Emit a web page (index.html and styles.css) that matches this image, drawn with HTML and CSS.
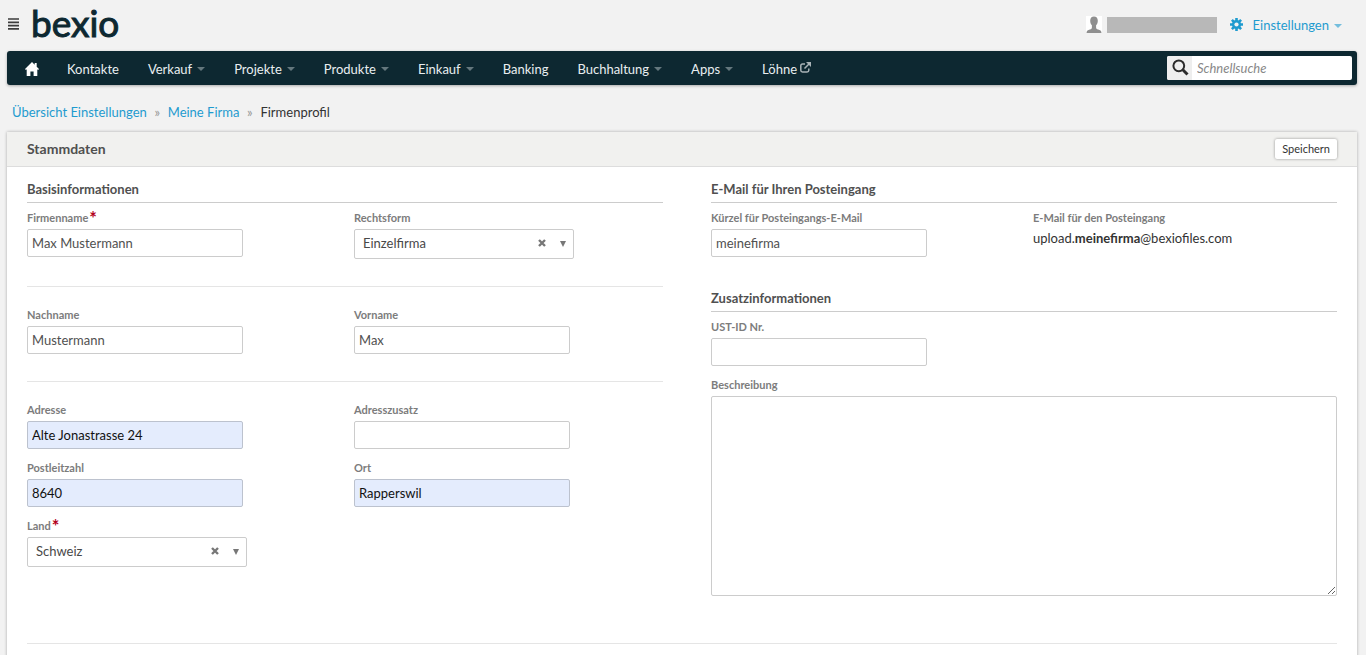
FILE: index.html
```
<!DOCTYPE html>
<html lang="de">
<head>
  <meta charset="UTF-8">
  <meta name="viewport" content="width=device-width, initial-scale=1.0">
  <title>bexio - Firmenprofil</title>
  <link rel="stylesheet" href="styles.css">
</head>
<body>
  <header class="topbar">
    <button type="button" class="menu-toggle" aria-label="Menü">
      <svg width="12" height="12" viewBox="0 0 12 12"><path d="M1 1h11M1 4.300h11M1 7.600h11M1 10.900h11" stroke="#3c3c3c" stroke-width="1.700"/></svg>
    </button>
    <a href="#" class="logo">bexio</a>
    <div class="account">
      <svg class="avatar" width="16" height="17" viewBox="0 0 16 17">
        <rect width="16" height="17" fill="#fff"/>
        <path d="M8 .5c2.400 0 3.800 1.500 3.800 4.200 0 2.300-.8 3.600-1.700 4.500v2.200c0 1 .6 1.600 2 2.200 2 .8 3.300 1 3.400 3.400H.5c.1-2.400 1.400-2.600 3.400-3.400 1.400-.6 2-1.200 2-2.200V9.200C5 8.300 4.200 7 4.200 4.700 4.200 2 5.600.5 8 .5z" fill="#8f8f8f"/>
      </svg>
      <span class="username"></span>
      <svg class="gear" width="13" height="13" viewBox="0 0 13 13">
        <g stroke="#1f9bcf" stroke-width="2.600">
          <path d="M6.500 0v13M0 6.500h13M1.900 1.900l9.200 9.200M11.100 1.900l-9.200 9.200"/>
        </g>
        <circle cx="6.500" cy="6.500" r="4.600" fill="#1f9bcf"/>
        <circle cx="6.500" cy="6.500" r="2.100" fill="#f2f2f2"/>
      </svg>
      <a href="#" class="settings">Einstellungen<span class="caret"></span></a>
    </div>
  </header>

  <nav class="navbar">
    <a href="#" class="home" aria-label="Home">
      <svg width="14" height="14" viewBox="0 0 14 14"><path d="M7 0l2.700 2.700V1h2v3.700L14 7l-.9.900-.8-.7V14H8.600V9.500H5.400V14H1.700V7.200l-.8.700L0 7z" fill="#fff"/></svg>
    </a>
    <a href="#">Kontakte</a>
    <a href="#">Verkauf<span class="caret"></span></a>
    <a href="#">Projekte<span class="caret"></span></a>
    <a href="#">Produkte<span class="caret"></span></a>
    <a href="#">Einkauf<span class="caret"></span></a>
    <a href="#">Banking</a>
    <a href="#">Buchhaltung<span class="caret"></span></a>
    <a href="#">Apps<span class="caret"></span></a>
    <a href="#">Löhne<svg class="external" width="11" height="11" viewBox="0 0 11 11" fill="none" stroke="#a9b3b7" stroke-width="1.500"><path d="M5 2H2.500Q.8 2 .8 3.700v4.600Q.8 10 2.500 10h4.600q1.700 0 1.700-1.700V6.500M4.500 6.500L9 2"/><path d="M6 0H11v5z" fill="#a9b3b7" stroke="none"/></svg></a>
    <form class="search">
      <button type="submit" aria-label="Suchen">
        <svg width="17" height="17" viewBox="0 0 17 17" fill="none" stroke="#2b2b2b"><circle cx="6.800" cy="6.800" r="5.400" stroke-width="2"/><path d="M10.800 10.800l4.700 4.700" stroke-width="3"/></svg>
      </button>
      <input type="text" placeholder="Schnellsuche" aria-label="Schnellsuche">
    </form>
  </nav>

  <div class="breadcrumb">
    <a href="#">Übersicht Einstellungen</a>
    <span class="sep">»</span>
    <a href="#">Meine Firma</a>
    <span class="sep">»</span>
    <span>Firmenprofil</span>
  </div>

  <main class="panel">
    <div class="panel-header">
      <h1>Stammdaten</h1>
      <button type="submit" form="profile" class="save">Speichern</button>
    </div>
    <form id="profile" class="panel-body">
      <div class="columns">
        <section>
          <h2>Basisinformationen</h2>
          <div class="row">
            <div class="field">
              <label for="company">Firmenname<span class="required">*</span></label>
              <input type="text" id="company" value="Max Mustermann">
            </div>
            <div class="field">
              <label for="legal">Rechtsform</label>
              <div class="select">
                <select id="legal"><option>Einzelfirma</option></select>
                <button type="button" class="clear" aria-label="Auswahl löschen"><svg width="8" height="8" viewBox="0 0 8 8"><path d="M1 1l6 6M7 1L1 7" stroke="#777" stroke-width="2.400"/></svg></button>
                <span class="arrow"></span>
              </div>
            </div>
          </div>
          <hr>
          <div class="row">
            <div class="field">
              <label for="lastname">Nachname</label>
              <input type="text" id="lastname" value="Mustermann">
            </div>
            <div class="field">
              <label for="firstname">Vorname</label>
              <input type="text" id="firstname" value="Max">
            </div>
          </div>
          <hr>
          <div class="row">
            <div class="field">
              <label for="address">Adresse</label>
              <input type="text" id="address" class="autofill" value="Alte Jonastrasse 24">
            </div>
            <div class="field">
              <label for="address2">Adresszusatz</label>
              <input type="text" id="address2">
            </div>
            <div class="field">
              <label for="zip">Postleitzahl</label>
              <input type="text" id="zip" class="autofill" value="8640">
            </div>
            <div class="field">
              <label for="city">Ort</label>
              <input type="text" id="city" class="autofill" value="Rapperswil">
            </div>
            <div class="field">
              <label for="country">Land<span class="required">*</span></label>
              <div class="select">
                <select id="country"><option>Schweiz</option></select>
                <button type="button" class="clear" aria-label="Auswahl löschen"><svg width="8" height="8" viewBox="0 0 8 8"><path d="M1 1l6 6M7 1L1 7" stroke="#777" stroke-width="2.400"/></svg></button>
                <span class="arrow"></span>
              </div>
            </div>
          </div>
        </section>

        <section>
          <h2>E-Mail für Ihren Posteingang</h2>
          <div class="row">
            <div class="field">
              <label for="shortcut">Kürzel für Posteingangs-E-Mail</label>
              <input type="text" id="shortcut" value="meinefirma">
            </div>
            <div class="field">
              <label for="inbox">E-Mail für den Posteingang</label>
              <output id="inbox">upload.<b>meinefirma</b>@bexiofiles.com</output>
            </div>
          </div>
          <h2 class="spaced">Zusatzinformationen</h2>
          <div class="field">
            <label for="vat">UST-ID Nr.</label>
            <input type="text" id="vat">
          </div>
          <div class="field">
            <label for="description">Beschreibung</label>
            <textarea id="description"></textarea>
          </div>
        </section>
      </div>
      <hr class="end">
    </form>
  </main>
</body>
</html>
```
FILE: styles.css
```
:root {
  --bg-body: #f2f2f2;
  --bg-nav: #0d2831;
  --link: #1f9bcf;
  --text: #333;
  --label: #7c7c7c;
  --border: #ccc;
}
* { box-sizing: border-box; margin: 0; padding: 0; }
body {
  padding: 0 9px 0 7px;
  background: var(--bg-body);
  color: var(--text);
  font: 13px/18px Lato, sans-serif;
  overflow-x: hidden;
}
/* page scrolls without a visible bar */
html { scrollbar-width: none; }
a { color: var(--link); text-decoration: none; }
button, input, select, textarea { font: inherit; color: inherit; }
button { border: none; background: none; cursor: pointer; }
svg { display: block; }

/* Top bar */
.topbar {
  display: flex;
  align-items: center;
  height: 51px;
  padding-bottom: 2px;
}
.menu-toggle { width: 12px; margin-right: 12px; padding-bottom: 2px; }
.logo {
  padding-bottom: 3px;
  color: var(--bg-nav);
  font-size: 37px;
  line-height: 46px;
  -webkit-text-stroke: 1px var(--bg-nav);
}
.account {
  display: flex;
  align-items: center;
  margin-left: auto;
  margin-right: 15px;
}
.username {
  width: 110px; height: 16px;
  margin: 0 13px 0 5px;
  background: #b8b8b8;
}
.settings { margin-left: 10px; }
.caret {
  display: inline-block;
  margin-left: 5px;
  vertical-align: middle;
  border: 4px solid transparent;
  border-top-color: currentColor;
  border-bottom: none;
  opacity: 0.6;
}

/* Navigation */
.navbar {
  display: flex;
  align-items: center;
  height: 34px;
  padding: 0 5px 0 4px;
  background: var(--bg-nav);
  border-radius: 3px;
  box-shadow: 0 1px 3px rgba(0,0,0,0.3);
}
.navbar a {
  display: flex;
  align-items: center;
  padding: 2px 15px 0 14px;
  color: #e9eef0;
}
.navbar .home { padding: 2px 14px 0; }
.navbar .caret { opacity: 0.4; }
.external { margin: 0 0 4px 3px; }
.search {
  display: flex;
  width: 185px; height: 24px;
  margin-left: auto;
  background: #fff;
  border-radius: 2px;
  overflow: hidden;
}
.search button {
  width: 25px;
  padding: 0 0 2px 5px;
  background: #eee;
}
.search input {
  flex: 1;
  min-width: 0;
  padding: 0 5px;
  border: none;
  background: none;
}
.search input::placeholder { color: #888; font-style: italic; }

/* Breadcrumb */
.breadcrumb {
  display: flex;
  padding: 18px 5px 11px;
}
.sep { width: 21px; text-align: center; color: #999; font-size: 13px; }

/* Panel */
.panel {
  background: #fff;
  box-shadow: 0 0 3px rgba(0,0,0,0.3);
}
.panel-header {
  display: flex;
  align-items: center;
  justify-content: space-between;
  height: 35px;
  padding: 0 20px;
  background: #f1f1ef;
  border-bottom: 1px solid #ddd;
}
h1 { font-size: 14px; color: #505050; }
.save {
  height: 20px;
  padding: 0 7px;
  background: #fff;
  border-radius: 2px;
  box-shadow: 0 0 3px rgba(0,0,0,0.4);
  font-size: 11px;
}
.panel-body { padding: 14px 20px; }
.columns {
  display: grid;
  grid-template-columns: 636fr 626fr;
  gap: 48px;
}
h2 {
  margin-bottom: 7px;
  padding-bottom: 5px;
  border-bottom: 1px solid var(--border);
  font-size: 13px;
  line-height: 16px;
  color: #505050;
}
.spaced { margin-top: 22px; }
hr {
  margin: 16px 0 20px;
  border: none;
  border-top: 1px solid #e5e5e5;
}
.end { margin: 36px 0 0; }

/* Form fields */
.row {
  display: grid;
  grid-template-columns: 1fr 1fr;
  column-gap: 18px;
}
.field { margin-bottom: 11px; }
label {
  display: flex;
  height: 16px;
  margin-bottom: 3px;
  font-size: 11px;
  font-weight: bold;
  line-height: 16px;
  color: var(--label);
}
.required { margin-left: 1px; color: #b3001b; font-size: 18px; }
.field input {
  display: block;
  width: 216px; height: 28px;
  padding: 0 4px;
  border: 1px solid var(--border);
  border-radius: 2px;
  background: #fff;
  color: #505050;
}
.field .autofill { background: #e4ecfd; border-color: #bcc2ce; color: #111; }
output { display: block; }
textarea {
  display: block;
  width: 100%; height: 200px;
  padding: 4px;
  border: 1px solid var(--border);
  border-radius: 2px;
  resize: vertical;
}
.select { position: relative; width: 220px; }
select {
  display: block;
  appearance: none;
  width: 100%; height: 30px;
  padding: 0 50px 2px 8px;
  border: 1px solid var(--border);
  border-radius: 2px;
  background: #fff;
  color: #484848;
}
.clear { position: absolute; top: 10px; right: 28px; }
.arrow {
  position: absolute; top: 12px; right: 8px;
  border: 3px solid transparent;
  border-top: 6px solid #777;
  border-bottom: none;
  pointer-events: none;
}
```
